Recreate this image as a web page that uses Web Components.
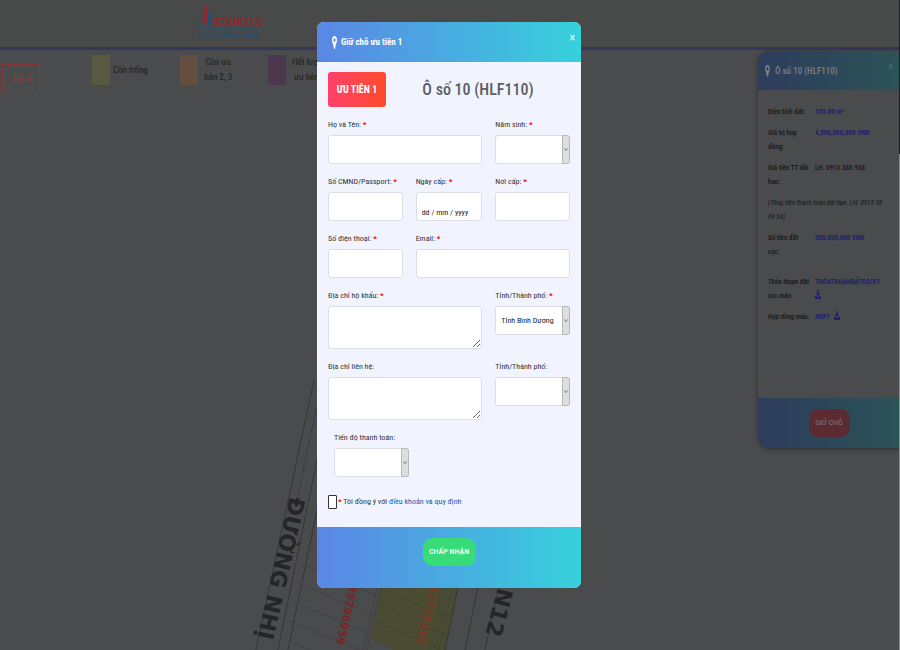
<!DOCTYPE html>
<html lang="vi">
<head>
<meta charset="utf-8">
<title>Giữ chỗ ưu tiên 1</title>
<style>
html, body { margin: 0; height: 100%; }
body { font-family: "Roboto Condensed", Roboto, "Liberation Sans", sans-serif; font-size: 8px; line-height: 14px; color: #222; background: #4a4b4c; }
</style>
</head>
<body>
<booking-page>
  <site-header></site-header>
  <status-legend>
    <legend-item color="#595941">Còn trống</legend-item>
    <legend-item color="#644e40">Còn ưu<br>tiên 2, 3</legend-item>
    <legend-item color="#4b384f">Hết lượt<br>ưu tiên</legend-item>
  </status-legend>
  <site-map></site-map>
  <lot-panel slot="overlay" heading="Ô số 10 (HLF110)">
    <lot-row label="Diện tích đất:"><b>150.00 m²</b></lot-row>
    <lot-row label="Giá trị hợp đồng:"><b>4,500,000,000 VND</b></lot-row>
    <lot-row label="Giá tiền TT dài hạn:">LH: 0913.386.938</lot-row>
    <lot-row note>(Tổng tiền thanh toán dài hạn. LH: 0913 38 69 38)</lot-row>
    <lot-row label="Số tiền đặt cọc:"><b>500,000,000 VND</b></lot-row>
    <lot-row document label="Thỏa thuận đặt cọc mẫu:" file="THỎATHUẬNĐẶTCỌCF1" spaced></lot-row>
    <lot-row document label="Hợp đồng mẫu:" file="HDF1"></lot-row>
  </lot-panel>
  <booking-dialog slot="overlay" heading="Giữ chỗ ưu tiên 1">
    <form-field class="c2" label="Họ và Tên:" required></form-field>
    <form-field label="Năm sinh:" kind="select" required></form-field>
    <form-field label="Số CMND/Passport:" required></form-field>
    <form-field label="Ngày cấp:" value="dd / mm / yyyy" kind="date" required></form-field>
    <form-field label="Nơi cấp:" required></form-field>
    <form-field label="Số điện thoại:" required></form-field>
    <form-field class="c2" label="Email:" required></form-field>
    <form-field class="c2" label="Địa chỉ hộ khẩu:" kind="textarea" required></form-field>
    <form-field label="Tỉnh/Thành phố:" kind="select" value="Tỉnh Bình Dương" required></form-field>
    <form-field class="c2" label="Địa chỉ liên hệ:" kind="textarea"></form-field>
    <form-field label="Tỉnh/Thành phố:" kind="select"></form-field>
    <form-field class="inset" label="Tiến độ thanh toán:" kind="select"></form-field>
    <terms-check class="all"></terms-check>
  </booking-dialog>
</booking-page>
<script>
const pin = '<svg class="pin" viewBox="0 0 6 13" preserveAspectRatio="none" aria-hidden="true"><path fill="currentColor" fill-rule="evenodd" d="M3 0C1.2 0 0 1.6 0 3.9 0 6.7 2 8.200 2.200 12.200 2.400 13.200 3.600 13.200 3.800 12.200 4 8.200 6 6.700 6 3.900 6 1.600 4.800 0 3 0ZM3 2.200C3.800 2.200 4.300 3 4.300 4S3.800 5.800 3 5.800 1.700 5 1.700 4 2.200 2.200 3 2.200Z"/></svg>';
const download = '<svg class="dl" viewBox="0 0 6 9" aria-hidden="true"><path fill="currentColor" d="M2.300 0H3.700V3.500H5.200L3 6.300.8 3.500H2.300ZM0 6H1.500L3 7.500 4.500 6H6V9H0Z"/></svg>';

function define(name, render) {
  customElements.define(name, class extends HTMLElement {
    constructor() {
      super();
      this.attachShadow({ mode: 'open' });
    }
    connectedCallback() {
      if (!this.shadowRoot.childNodes.length) this.shadowRoot.innerHTML = '<style>*{box-sizing:border-box}</style>' + render(this);
    }
  });
}

define('booking-page', () => `
<style>
:host { display: flex; flex-direction: column; min-height: 100vh; position: relative; overflow: hidden; }
.bar { position: absolute; top: 0; right: 0; bottom: 0; width: 1px; background: linear-gradient(#1c1d1e 154px, #8b8c8d 154px); }
</style>
<slot></slot><slot name="overlay"></slot><div class="bar"></div>`);

define('site-header', () => `
<style>
:host { display: block; background: #484949; border-bottom: 3px solid #34365c; padding: 3px 0 5px 22%; box-sizing: border-box; }
svg { display: block; width: 70px; height: 39px; }
</style>
<svg viewBox="0 0 70 39" role="img" aria-label="Becamex IJC">
  <path fill="#8a2a32" d="M4.500 20.500 5.200 6 9.500 1V21Z"/>
  <path fill="#24506e" d="M9.800 8 13.500 13.500V20.500L11.500 22.500H7L9.800 20.500Z"/>
  <path fill="none" stroke="#24506e" stroke-width="1.300" d="M3.800 13.500C2 17-.5 20 .2 23.500.8 25.500 3 25 5 25H56"/>
  <text x="15" y="22" font-size="9" font-weight="700" fill="#8a2a32">BECAMEX IJC</text>
  <text x="0" y="35" font-size="7" font-weight="500" fill="#24506e">Kiến tạo không ngừng</text>
</svg>`);

define('status-legend', () => `
<style>
:host { display: flex; gap: 52px; padding: 5px 2px 3px; align-items: flex-start; }
button { font: inherit; font-size: 9px; color: #a03438; background: none; border: 1px solid #8c373b; width: 38px; height: 30px; padding: 0; margin-top: 9px; }
.items { display: grid; grid-template-columns: repeat(3, 88px); }
</style>
<button type="button">‹ Trở về</button><div class="items"><slot></slot></div>`);

define('legend-item', el => `
<style>
:host { display: flex; align-items: center; font-size: 9px; line-height: 15px; color: #1c1d1e; text-align: center; }
i { width: 18px; height: 30px; margin-right: 3px; background: ${el.getAttribute('color')}; }
:host(:not(:first-child)) i { margin-right: 6px; }
</style><i></i><span><slot></slot></span>`);

define('site-map', () => {
  let plots = '';
  for (let i = 0; i < 6; i++) plots += `<path d="M${306 - i * 4} ${545 + i * 19} l78 33"/>`;
  return `
<style>
:host { display: block; flex: 1; overflow: hidden; }
svg { display: block; width: 100%; }
text { font-family: "DejaVu Sans", sans-serif; font-weight: 700; }
</style>
<svg viewBox="0 97 900 553" role="img" aria-label="Bản đồ phân lô">
  <g fill="none" stroke="#404142">${plots}
    <path d="M379 580 363 650M383 580 367 650"/></g>
  <path fill="#4b4a32" d="M383 580H459L445 650H395L372 639Z"/>
  <g fill="none" stroke="#424330"><path d="M380 588 452 620M378 604 449 636M375 621 440 650"/></g>
  <g fill="none" stroke="#354a32"><path d="M443 586 430 650M452 588 439 650M447 587 434 650" stroke-dasharray="5 3"/></g>
  <g fill="none" stroke="#363738">
    <path d="M314 380 256 650M317 460 278 650M317 510 288 650M459 582 445 650M479 582 465 650M498 590 485 650"/>
    <path d="M316 410 298 495" stroke-dasharray="8 2 2 2"/>
  </g>
  <g fill="#242526" font-size="22">
    <text transform="translate(290 496) rotate(103)">ĐƯỜNG NHỊ</text>
    <text transform="translate(498 587) rotate(105)">N12</text>
  </g>
  <g font-size="11">
    <text fill="#7a2426" transform="translate(350 584) rotate(103)">39796959</text>
    <text fill="#7a3a24" transform="translate(431 584) rotate(103)">81718192</text>
  </g>
</svg>`;
});

define('lot-panel', el => `
<style>
:host { position: absolute; top: 51px; right: 0; width: 142px; background: #4a4b4c; border-radius: 12px 0 0 12px; overflow: hidden; box-shadow: 0 1px 5px #2f3031; color: #161718; font-size: 7px; }
header { display: flex; align-items: center; gap: 5px; height: 39px; padding: 0 7px; background: linear-gradient(90deg, #2e3c5c, #2b5357); color: #7d7f81; }
h2 { margin: 0; flex: 1; font-size: 9px; font-weight: 500; }
.pin { width: 5px; height: 12px; }
header button { border: 0; background: none; padding: 0; font: inherit; font-size: 10px; color: #4f7071; align-self: flex-start; margin-top: 9px; }
.rows { padding: 15px 14px 18px 10px; min-height: 308px; display: flex; flex-direction: column; gap: 7px; }
footer { display: flex; justify-content: center; padding: 11px; height: 50px; background: linear-gradient(90deg, #2e3c5c, #2b5357); }
footer button { font: inherit; font-size: 8px; color: #8a7679; background: #5c2a31; border: 0; border-radius: 9px; width: 41px; height: 28px; padding: 0; }
</style>
<header>${pin}<h2>${el.getAttribute('heading')}</h2><button type="button" aria-label="Đóng">×</button></header>
<div class="rows"><slot></slot></div>
<footer><button type="button">GIỮ CHỖ</button></footer>`);

define('lot-row', el => `
<style>
:host { display: grid; grid-template-columns: 42px 1fr; column-gap: 5px; font-weight: 500; }
:host([note]) { display: block; font-style: italic; font-weight: 400; }
:host([document]) { font-style: italic; }
:host([spaced]) { margin-top: 9px; }
::slotted(b), a { color: #1e1e72; font-weight: 700; text-decoration: none; }
.dl { width: 6px; height: 9px; margin-left: 3px; vertical-align: -1px; }
:host([spaced]) .dl { margin-left: 0; }
</style>
${el.hasAttribute('note') ? '<slot></slot>' :
  `<span>${el.getAttribute('label')}</span><span>${el.hasAttribute('file') ? `<a href="#">${el.getAttribute('file')} ${download}</a>` : '<slot></slot>'}</span>`}`);

define('booking-dialog', el => `
<style>
:host { position: absolute; top: 22px; left: 0; right: 2px; margin: 0 auto; width: min(264px, 100% - 32px); border-radius: 7px; overflow: hidden; background: #f1f3fe; color: #333; }
header, footer { background: linear-gradient(90deg, #5b86e5, #36d1dc); }
header { display: flex; align-items: center; gap: 4px; height: 40px; padding: 0 6px 0 15px; color: #fff; }
.pin { width: 5px; height: 13px; }
h1 { flex: 1; margin: 0; font-size: 9px; font-weight: 700; }
header button { align-self: flex-start; margin-top: 9px; border: 0; background: none; padding: 0; font: inherit; font-size: 12px; font-weight: 700; color: #c4eef5; }
.top { display: grid; grid-template-columns: 58px 1fr; align-items: center; padding: 10px 11px 8px; }
.badge { display: grid; place-items: center; height: 35px; border-radius: 3px; background: linear-gradient(90deg, #ff416c, #ff4b2b); color: #fff; font-size: 10px; font-weight: 700; }
h2 { margin: 0; text-align: center; font-size: 16px; line-height: 24px; font-weight: 500; color: #5c5e62; }
form { display: grid; grid-template-columns: 75fr 67fr 75fr; gap: 8px 13px; padding: 0 11px 18px; }
::slotted(.c2) { grid-column: span 2; }
::slotted(.all) { grid-column: 1 / -1; margin-top: 10px; }
::slotted(.inset) { margin: 0 -6px 0 6px; grid-column: 1; }
footer { display: flex; justify-content: center; align-items: flex-start; height: 61px; padding-top: 11px; }
footer button { border: 0; border-radius: 10px; width: 53px; height: 28px; padding: 0; background: #37dc79; color: #fff; font: inherit; font-weight: 500; }
</style>
<header>${pin}<h1>${el.getAttribute('heading')}</h1><button type="button" aria-label="Đóng">×</button></header>
<div class="top"><span class="badge">ƯU TIÊN 1</span><h2>Ô số 10 (HLF110)</h2></div>
<form id="booking"><slot></slot></form>
<footer><button type="submit" form="booking">CHẤP NHẬN</button></footer>`);

define('form-field', el => {
  const kind = el.getAttribute('kind') || 'text';
  const value = el.getAttribute('value') || '';
  const control = {
    text: '<input id="f" type="text">',
    date: `<input id="f" class="date" type="text" value="${value}">`,
    textarea: '<textarea id="f"></textarea>',
    select: `<div class="pick"><select id="f"><option>${value}</option></select><svg viewBox="0 0 8 27" aria-hidden="true"><path d="M2 12 4 15 6 12" fill="none" stroke="#666"/></svg></div>`
  }[kind];
  return `
<style>
:host { display: block; min-width: 0; }
label { display: block; height: 20px; line-height: 20px; white-space: nowrap; }
em { color: #f00; font-style: normal; font-weight: 700; }
input, select, textarea { display: block; width: 100%; height: 29px; margin: 0; padding: 0 5px; border: 1px solid #dcdee6; border-radius: 3px; background: #fff; color: #222; font: inherit; outline: 0; }
textarea { height: 43px; resize: vertical; }
.date { padding-top: 11px; }
select { appearance: none; padding-right: 8px; }
.pick { display: grid; grid-template-columns: 1fr 8px; }
.pick select { grid-area: 1 / 1 / 2 / 3; }
.pick svg { grid-area: 1 / 2; width: 8px; height: 29px; background: #dedede; border: 1px solid #b9b9b9; border-radius: 0 3px 3px 0; pointer-events: none; z-index: 1; }
</style>
<label for="f">${el.getAttribute('label')}${el.hasAttribute('required') ? ' <em>*</em>' : ''}</label>${control}`;
});

define('terms-check', () => `
<style>
:host { display: flex; align-items: center; gap: 1px; }
input { appearance: none; flex: none; width: 9px; height: 14px; margin: 0; border: 1px solid #333; border-radius: 1px; background: #fff; }
em { color: #f00; font-style: normal; font-weight: 700; }
a { color: #1060b0; text-decoration: none; }
</style>
<input id="ok" type="checkbox"><span><label for="ok"><em>*</em> Tôi đồng ý với</label> <a href="#">điều khoản và quy định</a></span>`);
</script>
</body>
</html>
